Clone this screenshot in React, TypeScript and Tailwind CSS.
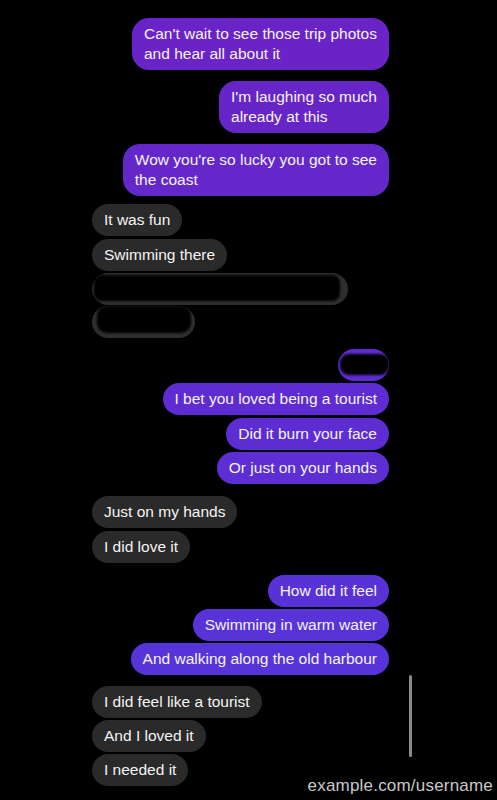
type Side = "in" | "out";

interface Msg {
  side: Side;
  lines: string[];
  mt: string;
  tone?: string;
}

const thread: Msg[] = [
  { side: "out", lines: ["Can't wait to see those trip photos", "and hear all about it"], mt: "mt-[18px]", tone: "bg-[#6a23c6]" },
  { side: "out", lines: ["I'm laughing so much", "already at this"], mt: "mt-[11px]", tone: "bg-[#6725c8]" },
  { side: "out", lines: ["Wow you're so lucky you got to see", "the coast"], mt: "mt-[11px]", tone: "bg-[#6427ca]" },
  { side: "in", lines: ["It was fun"], mt: "mt-[8px]" },
  { side: "in", lines: ["Swimming there"], mt: "mt-[3px]" },
];

const thread2: Msg[] = [
  { side: "out", lines: ["I bet you loved being a tourist"], mt: "mt-[2px]", tone: "bg-[#5e2cd2]" },
  { side: "out", lines: ["Did it burn your face"], mt: "mt-[3px]", tone: "bg-[#5d2dd3]" },
  { side: "out", lines: ["Or just on your hands"], mt: "mt-[2px]", tone: "bg-[#5c2ed4]" },
  { side: "in", lines: ["Just on my hands"], mt: "mt-[12px]" },
  { side: "in", lines: ["I did love it"], mt: "mt-[3px]" },
  { side: "out", lines: ["How did it feel"], mt: "mt-[12px]", tone: "bg-[#5932d7]" },
  { side: "out", lines: ["Swimming in warm water"], mt: "mt-[2px]", tone: "bg-[#5833d8]" },
  { side: "out", lines: ["And walking along the old harbour"], mt: "mt-[2px]", tone: "bg-[#5734d9]" },
  { side: "in", lines: ["I did feel like a tourist"], mt: "mt-[11px]" },
  { side: "in", lines: ["And I loved it"], mt: "mt-[2px]" },
  { side: "in", lines: ["I needed it"], mt: "mt-[2px]" },
];

function Bubble({ m }: { m: Msg }) {
  const out = m.side === "out";
  return (
    <div className={`flex ${out ? "justify-end" : "justify-start"} ${m.mt}`}>
      <div
        className={`rounded-[17px] px-3 py-[6px] text-[15.5px] leading-[20px] text-[#f4f4f4] ${
          out ? m.tone : "bg-[#2a2a2a]"
        }`}
      >
        {m.lines.map((l, i) => (
          <div key={i} className="whitespace-nowrap">
            {l}
          </div>
        ))}
      </div>
    </div>
  );
}

// scribbled-out bubbles: the bubble shows only at the rim, black ink inside
function Redacted({
  w,
  tone,
  mt,
  side,
  ink,
}: {
  w: string;
  tone: string;
  mt: string;
  side: Side;
  ink: string;
}) {
  return (
    <div className={`flex ${side === "out" ? "justify-end" : "justify-start"} ${mt}`}>
      <div className={`relative h-[32px] ${w} overflow-hidden rounded-[16px] ${tone}`}>
        <div className={`absolute bg-black blur-[0.8px] ${ink}`} />
      </div>
    </div>
  );
}

export default function App() {
  return (
    <div
      className="relative h-[800px] w-[497px] overflow-hidden bg-black"
      style={{ fontFamily: '"Liberation Sans", Arial, sans-serif' }}
    >
      <div className="flex flex-col pl-[92px] pr-[108px]">
        {thread.map((m, i) => (
          <Bubble key={i} m={m} />
        ))}
        <Redacted
          side="in"
          w="w-[256px]"
          tone="bg-[#2e2e2e]"
          mt="mt-[2px]"
          ink="left-[2px] right-[8px] top-[2px] bottom-[4px] rounded-[8px]"
        />
        <Redacted
          side="in"
          w="w-[103px]"
          tone="bg-[#2e2e2e]"
          mt="mt-[1px]"
          ink="left-[5px] right-[4px] top-0 bottom-[5px] rounded-[10px]"
        />
        <Redacted
          side="out"
          w="w-[51px]"
          tone="bg-[#5f2ad0]"
          mt="mt-[11px]"
          ink="left-[2px] right-0 top-[5px] bottom-[6px] rounded-[9px]"
        />
        {thread2.map((m, i) => (
          <Bubble key={i} m={m} />
        ))}
      </div>

      {/* scroll indicator */}
      <div className="absolute left-[409px] top-[675px] h-[82px] w-[3px] rounded-full bg-[#8a8a8a]" />

      <div className="absolute bottom-[2px] right-[4px] text-[17px] font-light tracking-[0.2px] text-[#c9c9c9]">
        example.com/username
      </div>
    </div>
  );
}
